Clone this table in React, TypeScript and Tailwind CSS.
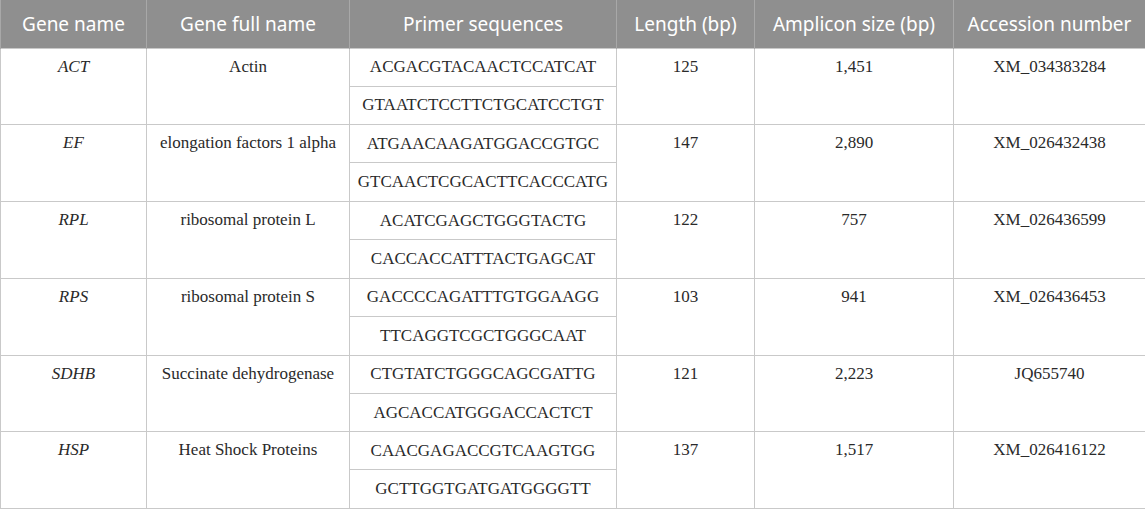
const headers = [
  "Gene name",
  "Gene full name",
  "Primer sequences",
  "Length (bp)",
  "Amplicon size (bp)",
  "Accession number",
];

const widths = ["w-[146px]", "w-[203px]", "w-[267px]", "w-[138px]", "w-[199px]", "w-[192px]"];

type Gene = {
  name: string;
  full: string;
  primers: [string, string];
  length: string;
  amplicon: string;
  accession: string;
};

const genes: Gene[] = [
  { name: "ACT", full: "Actin", primers: ["ACGACGTACAACTCCATCAT", "GTAATCTCCTTCTGCATCCTGT"], length: "125", amplicon: "1,451", accession: "XM_034383284" },
  { name: "EF", full: "elongation factors 1 alpha", primers: ["ATGAACAAGATGGACCGTGC", "GTCAACTCGCACTTCACCCATG"], length: "147", amplicon: "2,890", accession: "XM_026432438" },
  { name: "RPL", full: "ribosomal protein L", primers: ["ACATCGAGCTGGGTACTG", "CACCACCATTTACTGAGCAT"], length: "122", amplicon: "757", accession: "XM_026436599" },
  { name: "RPS", full: "ribosomal protein S", primers: ["GACCCCAGATTTGTGGAAGG", "TTCAGGTCGCTGGGCAAT"], length: "103", amplicon: "941", accession: "XM_026436453" },
  { name: "SDHB", full: "Succinate dehydrogenase", primers: ["CTGTATCTGGGCAGCGATTG", "AGCACCATGGGACCACTCT"], length: "121", amplicon: "2,223", accession: "JQ655740" },
  { name: "HSP", full: "Heat Shock Proteins", primers: ["CAACGAGACCGTCAAGTGG", "GCTTGGTGATGATGGGGTT"], length: "137", amplicon: "1,517", accession: "XM_026416122" },
];

const cell = "border border-[#c9c9c9] text-center";
const spanCell = `${cell} align-top pt-[8px]`;

export default function App() {
  return (
    <div className="w-[1145px] h-[510px] bg-white overflow-hidden">
      <table className="w-[1145px] border-collapse table-fixed text-[17px] leading-[20px] text-[#2a2a2a]" style={{ fontFamily: "'Liberation Serif', serif" }}>
        <colgroup>
          {widths.map((w, i) => (
            <col key={i} className={w} />
          ))}
        </colgroup>
        <thead>
          <tr className="h-[48px] bg-[#8f8f8f]">
            {headers.map((h) => (
              <th
                key={h}
                className="border-x border-[#a8a8a8] font-normal text-white text-[19px] font-['Noto_Sans','Open_Sans',sans-serif] text-center align-middle"
              >
                {h}
              </th>
            ))}
          </tr>
        </thead>
        <tbody>
          {genes.map((g) => (
            <>
              <tr key={g.name + "a"} className="h-[38px]">
                <td rowSpan={2} className={`${spanCell} italic`}>
                  {g.name}
                </td>
                <td rowSpan={2} className={spanCell}>
                  {g.full}
                </td>
                <td className={`${cell} align-middle`}>{g.primers[0]}</td>
                <td rowSpan={2} className={spanCell}>
                  {g.length}
                </td>
                <td rowSpan={2} className={spanCell}>
                  {g.amplicon}
                </td>
                <td rowSpan={2} className={spanCell}>
                  {g.accession}
                </td>
              </tr>
              <tr key={g.name + "b"} className="h-[38.8px]">
                <td className={`${cell} align-middle`}>{g.primers[1]}</td>
              </tr>
            </>
          ))}
        </tbody>
      </table>
    </div>
  );
}
